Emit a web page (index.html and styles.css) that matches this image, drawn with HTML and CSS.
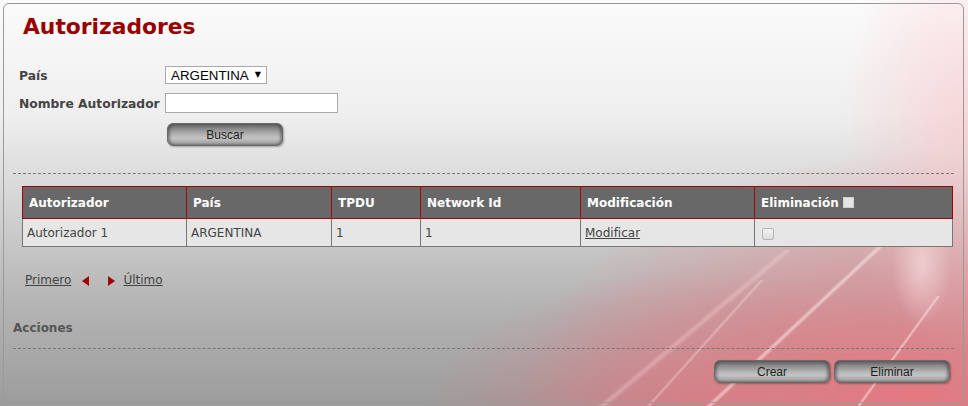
FILE: index.html
```html
<!DOCTYPE html>
<html lang="es">
<head>
    <meta charset="UTF-8">
    <meta name="viewport" content="width=device-width, initial-scale=1.0">
    <title>Autorizadores</title>
    <link rel="stylesheet" href="styles.css">
</head>
<body>
    <div class="panel">
        <h1>Autorizadores</h1>

        <form class="search" onsubmit="return false">
            <div class="row">
                <label for="pais">País</label>
                <span class="select-wrap">
                    <select id="pais">
                        <option>ARGENTINA</option>
                    </select>
                </span>
            </div>
            <div class="row">
                <label for="nombre">Nombre Autorizador</label>
                <input type="text" id="nombre">
            </div>
            <div class="row row-actions">
                <button class="btn">Buscar</button>
            </div>
        </form>

        <div class="separator"></div>

        <table class="grid">
            <thead>
                <tr>
                    <th class="col-aut">Autorizador</th>
                    <th class="col-pais">País</th>
                    <th class="col-tpdu">TPDU</th>
                    <th class="col-net">Network Id</th>
                    <th class="col-mod">Modificación</th>
                    <th class="col-del">Eliminación <input type="checkbox" class="check-all"></th>
                </tr>
            </thead>
            <tbody>
                <tr>
                    <td>Autorizador 1</td>
                    <td>ARGENTINA</td>
                    <td>1</td>
                    <td>1</td>
                    <td><a href="#">Modificar</a></td>
                    <td><input type="checkbox" class="check"></td>
                </tr>
            </tbody>
        </table>

        <div class="pager">
            <a href="#">Primero</a>
            <span class="arrow arrow-left"></span>
            <span class="arrow arrow-right"></span>
            <a href="#">Último</a>
        </div>

        <h3 class="actions-title">Acciones</h3>
        <div class="separator separator-bottom"></div>

        <div class="actions">
            <button class="btn">Crear</button>
            <button class="btn">Eliminar</button>
        </div>
    </div>
</body>
</html>
```

FILE: styles.css
```css
html, body {
    height: 100%;
}

body {
    margin: 0;
    overflow: hidden;
    font-family: "DejaVu Sans", Verdana, sans-serif;
    font-size: 12px;
    color: #444;
    background:
        linear-gradient(137deg, transparent calc(50% - 3px), rgba(255, 235, 235, 0.6) 50%, transparent calc(50% + 3px)) 675px 206px / 240px 240px no-repeat,
        linear-gradient(126deg, transparent calc(50% - 2px), rgba(255, 230, 230, 0.6) 50%, transparent calc(50% + 2px)) 810px 296px / 170px 120px no-repeat,
        linear-gradient(132deg, transparent calc(50% - 2px), rgba(255, 225, 225, 0.4) 50%, transparent calc(50% + 2px)) 600px 280px / 180px 160px no-repeat,
        linear-gradient(140deg, transparent calc(50% - 4px), rgba(255, 215, 215, 0.35) 50%, transparent calc(50% + 4px)) 560px 250px / 230px 190px no-repeat,
        radial-gradient(ellipse 30px 60px at 922px 265px, rgba(255, 235, 235, 0.55), rgba(255, 235, 235, 0)),
        radial-gradient(ellipse 120px 220px at 960px 130px, rgba(255, 190, 195, 0.5), rgba(255, 190, 195, 0)),
        radial-gradient(ellipse 400px 250px at 920px 400px, rgba(240, 115, 125, 0.85), rgba(240, 115, 125, 0)),
        radial-gradient(ellipse 280px 150px at 700px 420px, rgba(232, 115, 125, 0.6), rgba(232, 115, 125, 0)),
        linear-gradient(to bottom, #fbfbfb 0%, #efefef 28%, #d4d4d4 50%, #b4b4b4 75%, #9c9c9c 100%);
}

.panel {
    box-sizing: border-box;
    width: 961px;
    height: 400px;
    margin: 3px 0 0 3px;
    padding: 0 9px;
    border: 1px solid #9a9a9a;
    border-radius: 6px;
}

h1 {
    margin: 10px 0 0 10px;
    font-size: 21.8px;
    line-height: 25px;
    color: #990000;
}

/* search form */

.search {
    margin: 27px 0 0 6px;
}

.row {
    display: flex;
    align-items: baseline;
}

.row + .row {
    margin-top: 9px;
}

.row-actions {
    padding-left: 148px;
}

.row + .row-actions {
    margin-top: 10px;
}

.row label {
    width: 146px;
    font-size: 12.3px;
    font-weight: bold;
    color: #444;
}

.select-wrap {
    position: relative;
}

.select-wrap::after {
    content: "▼";
    position: absolute;
    right: 6px;
    top: 4px;
    font-size: 8px;
    color: #000;
    pointer-events: none;
}

select {
    appearance: none;
    box-sizing: border-box;
    height: 18px;
    width: 102px;
    padding: 0 0 0 5px;
    font-family: "Liberation Sans", Arial, sans-serif;
    font-size: 13.33px;
    color: #000;
    background: #fff;
    border: 1px solid #a9a9a9;
    border-radius: 0;
}

input[type="text"] {
    box-sizing: border-box;
    width: 173px;
    height: 20px;
    font-family: "Liberation Sans", Arial, sans-serif;
    font-size: 13.33px;
    border: 1px solid #a9a9a9;
    background: #fff;
}

.btn {
    box-sizing: border-box;
    width: 116px;
    height: 23px;
    padding: 0;
    font-family: "Liberation Sans", Arial, sans-serif;
    font-size: 12px;
    color: #1e1e1e;
    border: 1px solid #6a6a6a;
    border-radius: 6px;
    background: linear-gradient(to bottom, #5c5c5c 0%, #8a8a8a 22%, #b3b3b3 50%, #c4c4c4 68%, #a8a8a8 88%, #7c7c7c 100%);
    box-shadow: inset 4px 0 3px -2px rgba(0, 0, 0, 0.35), inset -4px 0 3px -2px rgba(0, 0, 0, 0.35), 1px 1px 2px rgba(0, 0, 0, 0.3);
    cursor: pointer;
}

/* dashed lines */

.separator {
    margin-top: 27px;
    border-top: 1px dashed #777;
}

.separator-bottom {
    margin-top: 12px;
}

/* results table */

.grid {
    table-layout: fixed;
    width: 931px;
    margin: 12px 0 0 9px;
    border-collapse: collapse;
}

.grid th {
    height: 31px;
    padding: 0 0 0 6px;
    text-align: left;
    font-size: 12px;
    color: #fff;
    background: #686868;
    border: 1px solid #a30000;
}

.grid td {
    height: 27px;
    padding: 0 0 0 4px;
    color: #444;
    background: #e6e6e6;
    border: 1px solid #777;
}

.grid a {
    color: #444;
}

.col-aut { width: 157px; }
.col-pais { width: 138px; }
.col-tpdu { width: 82px; }
.col-net { width: 153px; }
.col-mod { width: 167px; }

.col-del {
    padding-top: 4px;
}

.check-all {
    appearance: none;
    width: 11px;
    height: 11px;
    margin: 0;
    vertical-align: -1px;
    background: #e4e4e4;
    border: 1px solid #d0d0d0;
}

.check {
    appearance: none;
    width: 12px;
    height: 12px;
    margin: 2px 0 0 3px;
    vertical-align: middle;
    border: 1px solid #b5b5b5;
    border-radius: 2px;
    background: linear-gradient(#f4f4f4, #dcdcdc);
}

/* pager */

.pager {
    display: flex;
    align-items: center;
    margin: 26px 0 0 12px;
    line-height: 15px;
}

.pager a {
    color: #444;
}

.arrow {
    width: 0;
    height: 0;
    border-top: 5px solid transparent;
    border-bottom: 5px solid transparent;
}

.arrow-left {
    margin-left: 11px;
    border-right: 7px solid #a00000;
}

.arrow-right {
    margin: 0 8px 0 19px;
    border-left: 7px solid #a00000;
}

/* actions */

.actions-title {
    margin: 33px 0 0;
    font-size: 12px;
    line-height: 15px;
    color: #555;
}

.actions {
    display: flex;
    justify-content: flex-end;
    gap: 4px;
    margin: 11px 4px 0 0;
}
```
